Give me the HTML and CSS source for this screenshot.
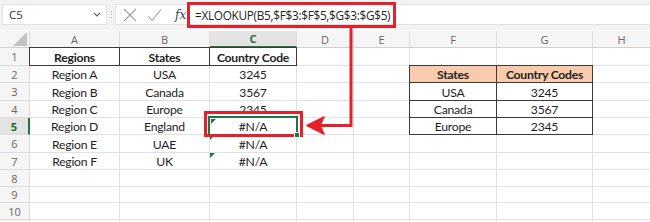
FILE: index.html
```html
<!DOCTYPE html>
<html>
<head>
<meta charset="utf-8">
<link rel="stylesheet" href="styles.css">
</head>
<body>
<div class="app">
  <div class="fbar">
    <div class="namebox">
      <span class="nb-text">C5</span>
      <svg class="chev" width="8" height="5" viewBox="0 0 8 5"><path d="M1 1 L4 4 L7 1" fill="none" stroke="#666" stroke-width="1.1"/></svg>
    </div>
    <div class="vsep"><i></i><i></i><i></i></div>
    <div class="formula">
      <div class="ficons">
        <svg class="ic" width="14" height="14" viewBox="0 0 14 14"><path d="M1 1 L13 13 M13 1 L1 13" stroke="#a0a0a0" stroke-width="1.1" fill="none"/></svg>
        <svg class="ic" width="15" height="14" viewBox="0 0 15 14"><path d="M1 8 L5 12.5 L14 1.5" stroke="#a0a0a0" stroke-width="1.1" fill="none"/></svg>
        <span class="fx">fx</span>
      </div>
      <div class="ftext">=XLOOKUP(B5,$F$3:$F$5,$G$3:$G$5)</div>
    </div>
  </div>

  <div class="sheet">
    <div class="corner"><svg width="14" height="14" viewBox="0 0 14 14"><path d="M14 0 L14 14 L0 14 Z" fill="#c2c2c2"/></svg></div>
    <div class="ch">A</div><div class="ch">B</div><div class="ch ch-sel">C</div><div class="ch">D</div><div class="ch">E</div><div class="ch">F</div><div class="ch">G</div><div class="ch">H</div>

    <div class="rh">1</div>
    <div class="c dark b">Regions</div><div class="c dark b">States</div><div class="c dark b">Country Code</div><div class="c"></div><div class="c"></div><div class="c"></div><div class="c"></div><div class="c"></div>

    <div class="rh">2</div>
    <div class="c">Region A</div><div class="c">USA</div><div class="c">3245</div><div class="c"></div><div class="c"></div><div class="c dark b peach">States</div><div class="c dark b peach">Country Codes</div><div class="c"></div>

    <div class="rh">3</div>
    <div class="c">Region B</div><div class="c">Canada</div><div class="c">3567</div><div class="c"></div><div class="c"></div><div class="c dark">USA</div><div class="c dark">3245</div><div class="c"></div>

    <div class="rh">4</div>
    <div class="c">Region C</div><div class="c">Europe</div><div class="c">2345</div><div class="c"></div><div class="c"></div><div class="c dark">Canada</div><div class="c dark">3567</div><div class="c"></div>

    <div class="rh rh-sel">5</div>
    <div class="c">Region D</div><div class="c">England</div><div class="c sel err">#N/A<span class="handle"></span></div><div class="c"></div><div class="c"></div><div class="c dark">Europe</div><div class="c dark">2345</div><div class="c"></div>

    <div class="rh">6</div>
    <div class="c">Region E</div><div class="c">UAE</div><div class="c err">#N/A</div><div class="c"></div><div class="c"></div><div class="c"></div><div class="c"></div><div class="c"></div>

    <div class="rh">7</div>
    <div class="c">Region F</div><div class="c">UK</div><div class="c err">#N/A</div><div class="c"></div><div class="c"></div><div class="c"></div><div class="c"></div><div class="c"></div>

    <div class="rh">8</div>
    <div class="c"></div><div class="c"></div><div class="c"></div><div class="c"></div><div class="c"></div><div class="c"></div><div class="c"></div><div class="c"></div>

    <div class="rh">9</div>
    <div class="c"></div><div class="c"></div><div class="c"></div><div class="c"></div><div class="c"></div><div class="c"></div><div class="c"></div><div class="c"></div>

    <div class="rh">10</div>
    <div class="c"></div><div class="c"></div><div class="c"></div><div class="c"></div><div class="c"></div><div class="c"></div><div class="c"></div><div class="c"></div>

    <div class="rh"></div>
    <div class="c"></div><div class="c"></div><div class="c"></div><div class="c"></div><div class="c"></div><div class="c"></div><div class="c"></div><div class="c"></div>
  </div>

  <div class="mark mark-formula"></div>
  <div class="mark mark-cell"></div>
  <svg class="arrow" width="650" height="222" viewBox="0 0 650 222">
    <path d="M351 27 L351 125.5 L318 125.5" fill="none" stroke="#e5202b" stroke-width="3"/>
    <path d="M307 125.5 L324 117 L320 125.5 L324 134 Z" fill="#e5202b" stroke="#e5202b" stroke-width="1.5" stroke-linejoin="round"/>
  </svg>
</div>
</body>
</html>
```

FILE: styles.css
```css
* { box-sizing: border-box; }
html, body { margin: 0; padding: 0; background: #fff; }
body { width: 650px; height: 222px; overflow: hidden; }

.app { position: relative; width: 650px; height: 222px; overflow: hidden; }

.fbar {
  height: 30px;
  background: #f3f3f3;
  display: flex;
  align-items: flex-start;
  padding-top: 4px;
  padding-left: 2px;
}
.namebox {
  width: 105px;
  height: 21px;
  background: #fff;
  border: 1px solid #e2e2e2;
  display: flex;
  align-items: center;
  justify-content: space-between;
  padding: 0 5px 0 6px;
  font-family: "Open Sans", "Noto Sans", sans-serif;
  font-size: 11.5px;
  color: #333;
}
.chev { display: block; }
.vsep {
  width: 8px;
  height: 21px;
  display: flex;
  flex-direction: column;
  align-items: center;
  justify-content: center;
  gap: 2px;
}
.vsep i { display: block; width: 1px; height: 1px; background: #aaa; }
.formula {
  flex: 1;
  height: 21px;
  background: #fff;
  border: 1px solid #e2e2e2;
  border-right: none;
  display: flex;
  align-items: center;
}
.ficons {
  display: flex;
  align-items: center;
  gap: 10px;
  padding-left: 7px;
  width: 79px;
}
.ic { display: block; }
.fx {
  font-family: "DejaVu Serif", "Liberation Serif", serif;
  font-style: italic;
  font-size: 12px;
  color: #444;
  margin-left: 3px;
}
.ftext {
  font-family: "Open Sans", "Noto Sans", sans-serif;
  font-size: 11.8px;
  color: #222;
  letter-spacing: -0.3px;
}

.sheet {
  margin-top: 1px;
  display: grid;
  grid-template-columns: 30px 90px 90px 87px 57px 56px 87px 96px 58px;
  grid-template-rows: 17px 18px 17px 18px 17px 17px 18px 17px 17px 16px 17px 17px;
  font-family: "Lato", "Noto Sans", sans-serif;
  font-size: 12.2px;
  letter-spacing: -0.25px;
  color: #1e1e1e;
}
.corner, .ch, .rh {
  background: #f5f5f5;
  color: #666;
  font-family: "Open Sans", "Noto Sans", sans-serif;
  font-size: 11px;
  letter-spacing: 0;
  border-right: 1px solid #dcdcdc;
  border-bottom: 1px solid #cfcfcf;
  display: flex;
  align-items: center;
  justify-content: center;
}
.corner { justify-content: flex-end; align-items: flex-end; padding: 0 2px 1px 0; }
.corner svg { display: block; }
.ch-sel {
  background: #e3e3e3;
  color: #1d6b40;
  font-weight: 700;
  border-bottom: 2px solid #217346;
}
.rh { border-bottom-color: #dcdcdc; }
.rh-sel {
  background: #e3e3e3;
  color: #1d6b40;
  font-weight: 700;
  border-right: 2px solid #217346;
}
.c {
  position: relative;
  border-right: 1px solid #e1e1e1;
  border-bottom: 1px solid #e1e1e1;
  display: flex;
  align-items: center;
  justify-content: center;
  white-space: nowrap;
  padding-top: 1px;
}
.b { font-weight: 700; }
.peach { background: #f8cbad; }
.dark::after {
  content: "";
  position: absolute;
  top: -1px; left: -1px; right: -1px; bottom: -1px;
  border: 1px solid #3a3a3a;
  pointer-events: none;
}
.err::before {
  content: "";
  position: absolute;
  top: 0; left: 0;
  width: 0; height: 0;
  border-top: 5px solid #1e7a3c;
  border-right: 5px solid transparent;
}
.sel::after {
  content: "";
  position: absolute;
  top: -2px; left: -2px; right: -2px; bottom: -2px;
  border: 2px solid #217346;
  pointer-events: none;
}
.sel.err::before { top: 1px; left: 1px; }
.handle {
  position: absolute;
  right: -4px; bottom: -4px;
  width: 6px; height: 6px;
  background: #217346;
  border: 1px solid #fff;
  z-index: 2;
}

.mark {
  position: absolute;
  border: 3px solid #e5202b;
  pointer-events: none;
}
.mark-formula { left: 187px; top: 2px; width: 209px; height: 26px; }
.mark-cell { left: 204px; top: 111px; width: 99px; height: 26px; }
.arrow { position: absolute; left: 0; top: 0; pointer-events: none; }
```
